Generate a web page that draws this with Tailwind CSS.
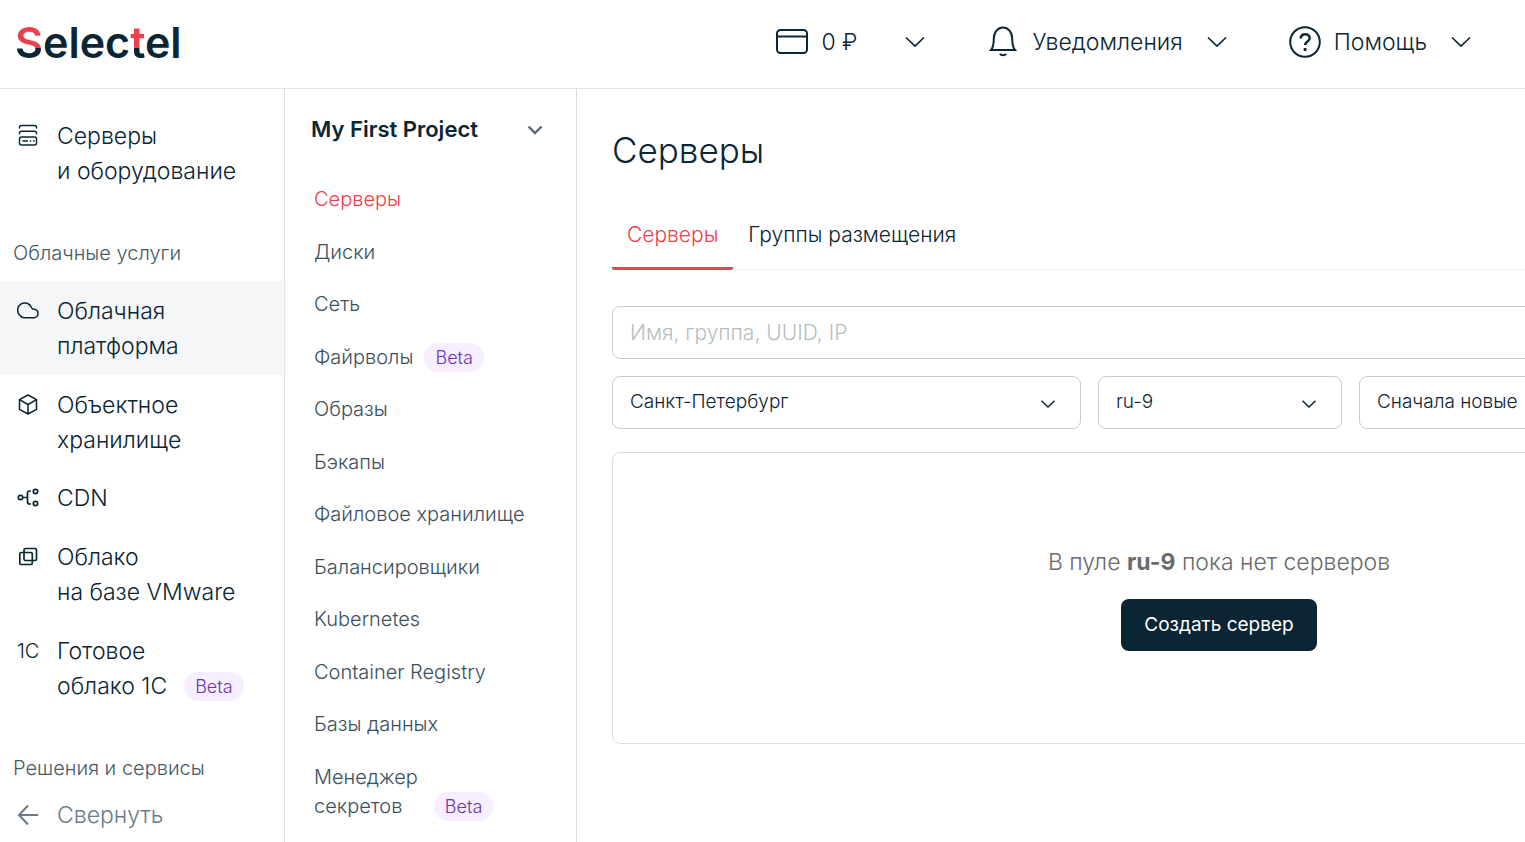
<!DOCTYPE html>
<html lang="ru">
<head>
<meta charset="utf-8">
<meta name="viewport" content="width=device-width, initial-scale=1">
<title>Серверы — Selectel</title>
<script src="https://cdn.jsdelivr.net/npm/@tailwindcss/browser@4"></script>
</head>
<body class="flex h-screen flex-col overflow-hidden bg-white font-['Inter','Open_Sans',sans-serif] font-light text-[#0a2533]">

<svg class="hidden" aria-hidden="true">
  <symbol id="chevron" viewBox="0 0 20 12"><path d="M1 1.500l9 8.500 9-8.500" fill="none" stroke="currentColor" stroke-width="1.700"/></symbol>
</svg>

<header class="flex h-[89px] shrink-0 items-center justify-between border-b border-[#e3e6e8] pr-[54px] pb-1 pl-[15px]">
  <a href="#" aria-label="Selectel" class="text-[43px] leading-[48px] font-semibold"><span class="bg-linear-to-b from-[#ee404c] from-62% to-[#0a2533] to-62% bg-clip-text text-transparent">S</span>elec<span class="bg-linear-to-b from-[#ee404c] from-62% to-[#0a2533] to-62% bg-clip-text text-transparent">t</span>el</a>
  <nav class="flex items-center gap-[62px] text-[23px] leading-8">
    <button type="button" class="flex items-center">
      <svg class="mr-[13px] size-8" viewBox="0 0 32 32" fill="none" stroke="currentColor" stroke-width="2"><rect x="1" y="4" width="30" height="23" rx="3.500"/><path d="M1 10.500h30"/></svg>
      <span>0 ₽</span>
      <svg class="ml-12 h-3 w-5"><use href="#chevron"/></svg>
    </button>
    <button type="button" class="flex items-center">
      <svg class="mr-[13px] size-8" viewBox="0 0 32 32" fill="none" stroke="currentColor" stroke-width="2"><path d="M4 24c2.500-3 2.800-6 2.800-11.500C6.800 6 11 1.600 16 1.600s9.200 4.400 9.200 10.900C25.200 18 25.500 21 28 24z"/><path d="M13 27.800c1 2 5 2 6 0"/></svg>
      <span>Уведомления</span>
      <svg class="ml-6 h-3 w-5"><use href="#chevron"/></svg>
    </button>
    <button type="button" class="flex items-center">
      <svg class="mr-[13px] size-8" viewBox="0 0 32 32" fill="none" stroke="currentColor" stroke-width="2"><circle cx="16" cy="16" r="14.800"/><path d="M11.700 12.500c0-6 9-5.500 9-.3 0 3.300-4.500 3.300-4.500 6.800" stroke-width="2.500"/><path d="M16.100 22v3" stroke-width="2.800"/></svg>
      <span>Помощь</span>
      <svg class="ml-6 h-3 w-5"><use href="#chevron"/></svg>
    </button>
  </nav>
</header>

<div class="flex min-h-0 flex-1">
  <aside class="flex w-[285px] shrink-0 flex-col border-r border-[#dde3e6]">
    <nav class="min-h-0 flex-1 overflow-hidden pt-[17px] text-[23px] leading-[35px]">
      <a href="#" class="flex pt-[13px] pb-[11px] pl-[17px]">
        <svg class="mt-[5px] mr-[18px] size-[22px] shrink-0" viewBox="0 0 22 22" fill="none" stroke="currentColor" stroke-width="1.500"><path d="M2.500 4.500V3.300c0-1.200.8-1.800 2-1.800h13c1.200 0 2 .6 2 1.800v1.200M2.500 10.200V9c0-1.200.8-1.800 2-1.800h13c1.200 0 2 .6 2 1.800v1.200"/><rect x="2.500" y="13" width="17" height="8" rx="2"/><path d="M5.500 17h5.500M12.800 17h1.500M16 17h1.500"/></svg>
        <span>Серверы<br>и оборудование</span>
      </a>
      <h2 class="mt-[37px] mb-[11px] pl-[13px] text-[20px] leading-[33px] text-[#455a66]">Облачные услуги</h2>
      <a href="#" aria-current="page" class="flex bg-[#f5f6f8] pt-[13px] pb-[11px] pl-[17px]">
        <svg class="mt-1.5 mr-[18px] size-[22px] shrink-0" viewBox="0 0 22 22" fill="none" stroke="currentColor" stroke-width="1.500"><path d="M7.500 17.800h9.300a4.200 4.200 0 0 0 4.200-4.200c0-2.300-1.700-4.100-4-4.300-1.300-.1-1.900-.4-2.400-1.600A7.200 7.200 0 1 0 3 15.500c1 1.500 2.500 2.300 4.500 2.300z"/></svg>
        <span>Облачная<br>платформа</span>
      </a>
      <a href="#" class="flex pt-[13px] pb-[11px] pl-[17px]">
        <svg class="mt-1.5 mr-[18px] size-[22px] shrink-0" viewBox="0 0 22 22" fill="none" stroke="currentColor" stroke-width="1.500" stroke-linejoin="round"><path d="M11 1l8.500 4.700v9.600L11 20l-8.500-4.700V5.700zM2.500 5.700L11 10.500l8.500-4.800M11 10.500V20"/></svg>
        <span>Объектное<br>хранилище</span>
      </a>
      <a href="#" class="flex py-3 pl-[17px]">
        <svg class="mt-1.5 mr-[18px] size-[22px] shrink-0" viewBox="0 0 22 22" fill="none" stroke="currentColor" stroke-width="1.700"><circle cx="3.500" cy="10.500" r="2.200"/><circle cx="18.500" cy="4.500" r="2.200"/><circle cx="18.500" cy="16.500" r="2.200"/><path d="M5.700 10.500h4.800M14 4h-1.500c-1.300 0-2 .7-2 2v9c0 1.300.7 2 2 2H14"/></svg>
        <span>CDN</span>
      </a>
      <a href="#" class="flex py-3 pl-[17px]">
        <svg class="mt-1.5 mr-[18px] size-[22px] shrink-0" viewBox="0 0 22 22" fill="none" stroke="currentColor" stroke-width="1.700"><rect x="7" y="2.500" width="12.500" height="12" rx="1.500"/><rect x="2.800" y="6.500" width="12.500" height="12" rx="1.500"/></svg>
        <span>Облако<br>на базе VMware</span>
      </a>
      <a href="#" class="flex py-3 pl-[17px]">
        <span class="w-10 shrink-0 text-[20px]">1С</span>
        <span>Готовое<br><span class="flex items-center gap-[17px]">облако 1С <span class="rounded-full bg-[#f7eeff] px-[11px] text-[18px] leading-[29px] text-[#6a33b8]">Beta</span></span></span>
      </a>
      <h2 class="mt-9 pl-[13px] text-[20px] leading-[33px] text-[#455a66]">Решения и сервисы</h2>
    </nav>
    <button type="button" class="flex h-[54px] shrink-0 items-center pl-[17px] text-[23px] text-[#6c7c85]">
      <svg class="mr-[18px] size-[22px]" viewBox="0 0 22 22" fill="none" stroke="currentColor" stroke-width="2"><path d="M21 11H2M11 1.500L2 11l9 9.500"/></svg>
      Свернуть
    </button>
  </aside>

  <aside class="w-[292px] shrink-0 overflow-hidden border-r border-[#d5dde0]">
    <button type="button" class="flex w-full items-center justify-between pt-6 pr-[33px] pl-[26px] text-[22px] leading-[33px] font-semibold">
      My First Project
      <svg class="h-[10px] w-4 text-[#5a6b75]" viewBox="0 0 16 10" fill="none" stroke="currentColor" stroke-width="2.400"><path d="M1.500 1.500L8 8l6.500-6.500"/></svg>
    </button>
    <ul class="mt-[39px] flex h-[636px] flex-col justify-between pl-[29px] text-[20px] leading-[29px] text-[#3b505c]">
      <li><a href="#" aria-current="page" class="text-[#ee404c]">Серверы</a></li>
      <li><a href="#">Диски</a></li>
      <li><a href="#">Сеть</a></li>
      <li><a href="#" class="flex items-center gap-[11px]">Файрволы <span class="rounded-full bg-[#f7eeff] px-[11px] text-[18px] text-[#6a33b8]">Beta</span></a></li>
      <li><a href="#">Образы</a></li>
      <li><a href="#">Бэкапы</a></li>
      <li><a href="#">Файловое хранилище</a></li>
      <li><a href="#">Балансировщики</a></li>
      <li><a href="#">Kubernetes</a></li>
      <li><a href="#">Container Registry</a></li>
      <li><a href="#">Базы данных</a></li>
      <li><a href="#" class="flex items-end gap-4"><span>Менеджер<br>секретов</span> <span class="rounded-full bg-[#f7eeff] px-[11px] text-[18px] text-[#6a33b8]">Beta</span></a></li>
    </ul>
  </aside>

  <main class="min-w-0 flex-1 overflow-hidden pt-[35px] pl-[35px]">
    <div class="min-w-[1214px]">
      <h1 class="text-[35px] leading-[52px]">Серверы</h1>
      <div role="tablist" class="mt-7 flex border-b border-[#eff3f4] text-[21px]">
        <button type="button" role="tab" aria-selected="true" class="-mb-px h-[66px] rounded-xs border-b-3 border-[#ee404c] px-[15px] pb-[2px] text-[#ee404c]">Серверы</button>
        <button type="button" role="tab" aria-selected="false" class="px-[15px] pb-1">Группы размещения</button>
      </div>
      <input type="search" aria-label="Поиск серверов" placeholder="Имя, группа, UUID, IP" class="mt-9 block h-[53px] w-full rounded-lg border border-[#c6cdd2] px-[17px] text-[21px] placeholder:text-[#b6bec2]">
      <div class="mt-[17px] flex gap-[17px] text-[19px]">
        <label class="relative w-[469px]">
          <select aria-label="Регион" class="h-[53px] w-full appearance-none rounded-lg border border-[#c6cdd2] px-[17px]"><option>Санкт-Петербург</option></select>
          <svg class="pointer-events-none absolute top-[24px] right-[26px] h-2 w-[14px]" viewBox="0 0 14 8" fill="none" stroke="currentColor" stroke-width="1.500"><path d="M.5.700L7 7l6.500-6.300"/></svg>
        </label>
        <label class="relative w-[244px]">
          <select aria-label="Пул" class="h-[53px] w-full appearance-none rounded-lg border border-[#c6cdd2] px-[17px]"><option>ru-9</option></select>
          <svg class="pointer-events-none absolute top-[24px] right-[26px] h-2 w-[14px]" viewBox="0 0 14 8" fill="none" stroke="currentColor" stroke-width="1.500"><path d="M.5.700L7 7l6.500-6.300"/></svg>
        </label>
        <label class="relative flex-1">
          <select aria-label="Сортировка" class="h-[53px] w-full appearance-none rounded-lg border border-[#c6cdd2] px-[17px]"><option>Сначала новые</option></select>
        </label>
      </div>
      <section class="mt-[23px] flex h-[292px] flex-col items-center justify-center gap-5 rounded-lg border border-[#d8dde0]">
        <p class="text-[23px] leading-[34px] text-[#6b6b6b]">В пуле <b class="font-bold">ru-9</b> пока нет серверов</p>
        <button type="button" class="h-[52px] rounded-lg bg-[#0a2533] px-[23px] text-[19px] font-normal text-white">Создать сервер</button>
      </section>
    </div>
  </main>
</div>
</body>
</html>
